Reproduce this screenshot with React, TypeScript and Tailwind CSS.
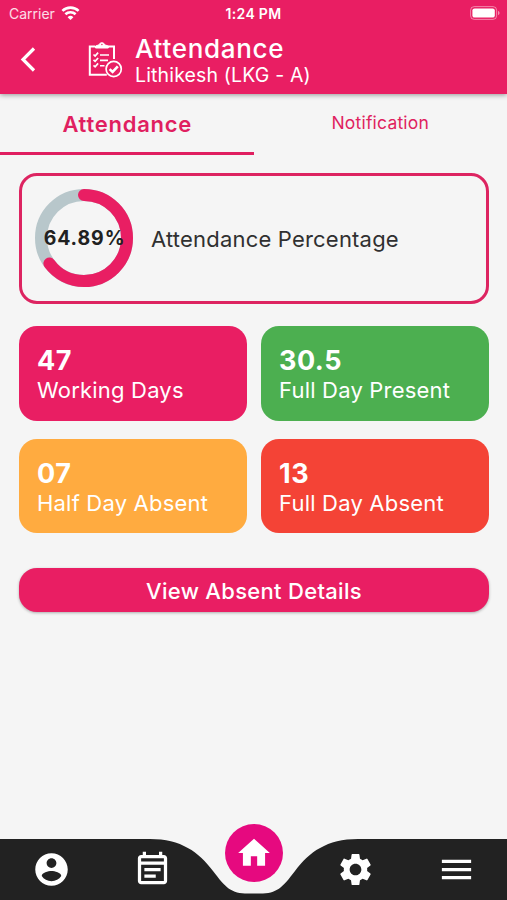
import { MdHome, MdMenu, MdOutlineEventNote, MdSettings } from 'react-icons/md';

const stats = [
  { value: '47', label: 'Working Days', color: 'bg-[#e91e63]' },
  { value: '30.5', label: 'Full Day Present', color: 'bg-[#4caf50]' },
  { value: '07', label: 'Half Day Absent', color: 'bg-[#ffab40]' },
  { value: '13', label: 'Full Day Absent', color: 'bg-[#f44336]' },
];

function WifiIcon() {
  return (
    <svg width="19" height="14" viewBox="0 0 18 14" fill="none" stroke="white" strokeWidth="2.6">
      <path d="M0.9 4.9a11.6 11.6 0 0 1 16.2 0" />
      <path d="M3.9 8.3a7.3 7.3 0 0 1 10.2 0" />
      <path d="M9 14 6.1 11.2a4.2 4.2 0 0 1 5.8 0z" fill="white" stroke="none" />
    </svg>
  );
}

function BatteryIcon() {
  return (
    <svg width="30" height="14" viewBox="0 0 30 14" fill="none">
      <rect x="0.6" y="0.6" width="26" height="12.8" rx="3.6" stroke="white" strokeOpacity="0.45" />
      <rect x="2.4" y="2.4" width="22.4" height="9.2" rx="2.2" fill="white" />
      <path d="M28 5v4c1-.4 1.5-1.1 1.5-2S29 5.4 28 5z" fill="white" fillOpacity="0.5" />
    </svg>
  );
}

function ClipboardIcon() {
  return (
    <svg width="36" height="37" viewBox="0 0 36 37" fill="none" stroke="white">
      <path d="M8 5.6H2.8v28.2h17" strokeWidth="2" />
      <path d="M21 5.6h6V18" strokeWidth="2" />
      <path d="M8.500 7V5l3.600-1.200a2.900 2.900 0 0 1 5.600 0l3.600 1.200V7z" fill="white" strokeWidth="1" />
      <circle cx="14.9" cy="3.5" r="0.7" fill="#e91e63" stroke="none" />
      <path d="m6.500 13.5 1.600 1.500 3-3.400M6.500 18.900l1.600 1.500 3-3.400M6.500 24.300l1.600 1.500 3-3.400" strokeWidth="1.7" />
      <path d="M13 14h9M13 19.4h8M13 24.8h4.500" strokeWidth="1.6" />
      <circle cx="26.7" cy="28" r="7.6" fill="#e91e63" strokeWidth="1.7" />
      <path d="m22.600 28.1 3 2.800 5.200-5.600" strokeWidth="2.6" />
    </svg>
  );
}

function AccountIcon() {
  return (
    <svg width="39" height="39" viewBox="0 0 24 24" fill="white">
      <path d="M12 2C6.48 2 2 6.48 2 12s4.48 10 10 10 10-4.48 10-10S17.52 2 12 2zm0 3c1.66 0 3 1.34 3 3s-1.34 3-3 3-3-1.34-3-3 1.34-3 3-3zm0 14.2c-2.5 0-4.71-1.28-6-3.22.03-1.99 4-3.08 6-3.08 1.99 0 5.97 1.09 6 3.08-1.29 1.94-3.5 3.22-6 3.22z" />
    </svg>
  );
}

function PercentRing({ percent }: { percent: number }) {
  return (
    <div className="relative -mt-[2px] flex h-[98px] w-[98px] items-center justify-center">
      <svg className="absolute inset-0" width="98" height="98" viewBox="0 0 98 98" fill="none" strokeWidth="12">
        <circle cx="49" cy="49" r="43" stroke="#b8c7cb" />
        <circle
          cx="49"
          cy="49"
          r="43"
          stroke="#e91e63"
          strokeLinecap="round"
          pathLength="100"
          strokeDasharray={`${percent} 100`}
          transform="rotate(-90 49 49)"
        />
      </svg>
      <span className="relative pt-[2px] pl-px text-[19.5px] font-bold tracking-[0.9px] whitespace-nowrap text-[#212121]">{percent}%</span>
    </div>
  );
}

function BottomNav() {
  return (
    <nav className="relative h-[76px]">
      <svg className="absolute bottom-0 left-0" width="507" height="61" viewBox="0 0 507 61">
        <path
          d="M0 0H150C181 0 199 13 213 32C226 49 231 54.5 248 54.5H260C277 54.5 282 49 295 32C309 13 327 0 358 0H507V61H0z"
          fill="#222222"
        />
      </svg>
      <div className="relative grid h-full grid-cols-5 justify-items-center pl-px text-white">
        <button className="mt-[26px] h-[39px]"><AccountIcon /></button>
        <button className="mt-[26px] h-[39px]"><MdOutlineEventNote size={39} /></button>
        <button className="flex h-[58px] w-[58px] items-center justify-center rounded-full bg-[#e6097f]">
          <MdHome size={38} />
        </button>
        <button className="mt-[26px] h-[39px]"><MdSettings size={39} /></button>
        <button className="mt-[26px] h-[39px]"><MdMenu size={39} /></button>
      </div>
    </nav>
  );
}

export default function App() {
  return (
    <div className="flex h-[900px] w-[507px] flex-col overflow-hidden bg-[#f5f5f5] font-['Inter',sans-serif]">
      <header className="relative h-[94px] shrink-0 bg-[#e91e63] text-white shadow-[0_1px_5px_rgba(0,0,0,0.4)]">
        <div className="grid h-[26px] grid-cols-3 items-center px-[9px] text-[14px]">
          <div className="flex items-center gap-[6px] text-white/85">
            <span>Carrier</span>
            <WifiIcon />
          </div>
          <span className="text-center font-semibold tracking-[0.3px]">1:24 PM</span>
          <div className="-mr-[2px] flex justify-end"><BatteryIcon /></div>
        </div>
        <div className="flex h-[68px] items-start pt-[2px]">
          <button className="mt-[19px] ml-[20px]">
            <svg width="16" height="25" viewBox="0 0 16 25" fill="none" stroke="white" strokeWidth="3.2">
              <path d="M14 1.5 3 12.5l11 11" />
            </svg>
          </button>
          <div className="mt-[13px] ml-[51px]"><ClipboardIcon /></div>
          <div className="ml-[12px] pt-[6px]">
            <h1 className="text-[26px] leading-[30px] font-medium tracking-[0.7px]">Attendance</h1>
            <p className="text-[19.5px] leading-[23px] tracking-[0.15px]">Lithikesh (LKG - A)</p>
          </div>
        </div>
      </header>

      <div className="grid h-[61px] shrink-0 grid-cols-2 text-[#e01f60]">
        <button className="border-b-[3px] border-[#e01f60] pt-[2px] pl-px text-[22px] font-semibold tracking-[0.75px]">Attendance</button>
        <button className="border-b-[3px] border-transparent pt-px text-[17.5px] tracking-[0.2px]">Notification</button>
      </div>

      <main className="flex flex-1 flex-col pt-[18px] pr-[18px] pl-[19px]">
        <section className="flex h-[131px] items-center gap-[18px] rounded-[18px] border-[3px] border-[#dd2461] pl-[13px]">
          <PercentRing percent={64.89} />
          <span className="pt-[2px] text-[22px] tracking-[0.2px] text-[#303030]">Attendance Percentage</span>
        </section>

        <section className="mt-[22px] grid grid-cols-2 gap-x-[14px] gap-y-[18px]">
          {stats.map((stat) => (
            <div key={stat.label} className={`h-[94.5px] rounded-[18px] pt-[19px] pl-[18px] text-white ${stat.color}`}>
              <div className="text-[27px] leading-[31px] font-bold tracking-[0.5px]">{stat.value}</div>
              <div className="text-[22px] leading-[28px] tracking-[0.2px]">{stat.label}</div>
            </div>
          ))}
        </section>

        <button className="mt-[35px] h-[44px] rounded-[18px] bg-[#e91e63] pt-[2px] text-[22px] font-medium tracking-[0.3px] text-white shadow-[0_1px_3px_rgba(0,0,0,0.3)]">
          View Absent Details
        </button>
      </main>

      <BottomNav />
    </div>
  );
}
